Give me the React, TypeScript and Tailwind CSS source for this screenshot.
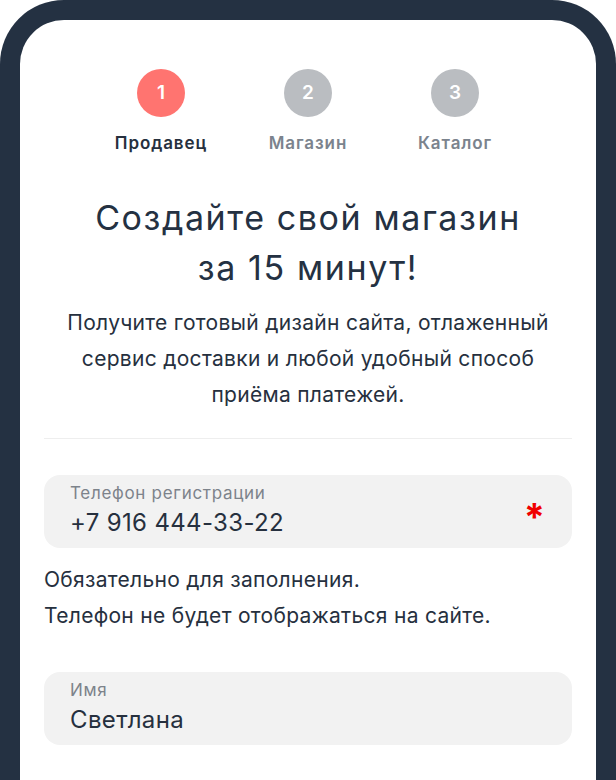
const steps = [
  { n: 1, label: "Продавец", active: true },
  { n: 2, label: "Магазин", active: false },
  { n: 3, label: "Каталог", active: false },
]

function Field({ label, value, required }: { label: string; value: string; required?: boolean }) {
  return (
    <div className="flex items-start justify-between rounded-[16px] bg-[#f2f2f2] pl-[26px] pr-[27px] pt-[8px] pb-[10px]">
      <div>
        <div className="text-[17px] leading-[20px] tracking-[0.7px] text-[#7d838b]">{label}</div>
        <div className="mt-[5px] text-[24px] leading-[30px] tracking-[0.35px] text-[#26303e]">{value}</div>
      </div>
      {required && <div className="mt-[19px] text-[38px] leading-[30px] font-bold text-[#f00000]">*</div>}
    </div>
  )
}

export default function App() {
  return (
    <div className="min-h-[780px] bg-white font-['Inter','Noto_Sans',sans-serif]">
      <div className="h-[780px] overflow-hidden rounded-t-[64px] bg-[#243142] px-[20px] pt-[20px]">
        <div className="h-full rounded-t-[44px] bg-white px-[24px] pt-[49px]">
          <div className="flex justify-center">
            {steps.map((step) => (
              <div key={step.n} className="flex w-[147px] flex-col items-center">
                <div
                  className={
                    step.active
                      ? "flex h-[48px] w-[48px] items-center justify-center rounded-full bg-[#ff7470] text-[19px] font-semibold text-white"
                      : "flex h-[48px] w-[48px] items-center justify-center rounded-full bg-[#babdc1] text-[19px] font-semibold text-white"
                  }
                >
                  {step.n}
                </div>
                <div
                  className={
                    step.active
                      ? "mt-[14px] text-[17px] leading-[24px] tracking-[0.9px] font-semibold text-[#26303e]"
                      : "mt-[14px] text-[17px] leading-[24px] tracking-[0.9px] font-semibold text-[#7b838d]"
                  }
                >
                  {step.label}
                </div>
              </div>
            ))}
          </div>

          <h1 className="mt-[38px] text-center text-[34px] leading-[50px] tracking-[1.6px] text-[#243142]">
            Создайте свой магазин
            <br />
            за 15 минут!
          </h1>
          <p className="mt-[12px] text-center text-[21px] leading-[36px] tracking-[0.3px] text-[#26303e]">
            Получите готовый дизайн сайта, отлаженный
            <br />
            сервис доставки и любой удобный способ
            <br />
            приёма платежей.
          </p>

          <div className="mt-[25px] border-t border-[#eeeeee]" />

          <div className="mt-[36px]">
            <Field label="Телефон регистрации" value="+7 916 444-33-22" required />
          </div>
          <div className="mt-[14px] text-[21px] leading-[36px] tracking-[0.3px] text-[#26303e]">
            <div>Обязательно для заполнения.</div>
            <div>Телефон не будет отображаться на сайте.</div>
          </div>

          <div className="mt-[38px]">
            <Field label="Имя" value="Светлана" />
          </div>
        </div>
      </div>
    </div>
  )
}
